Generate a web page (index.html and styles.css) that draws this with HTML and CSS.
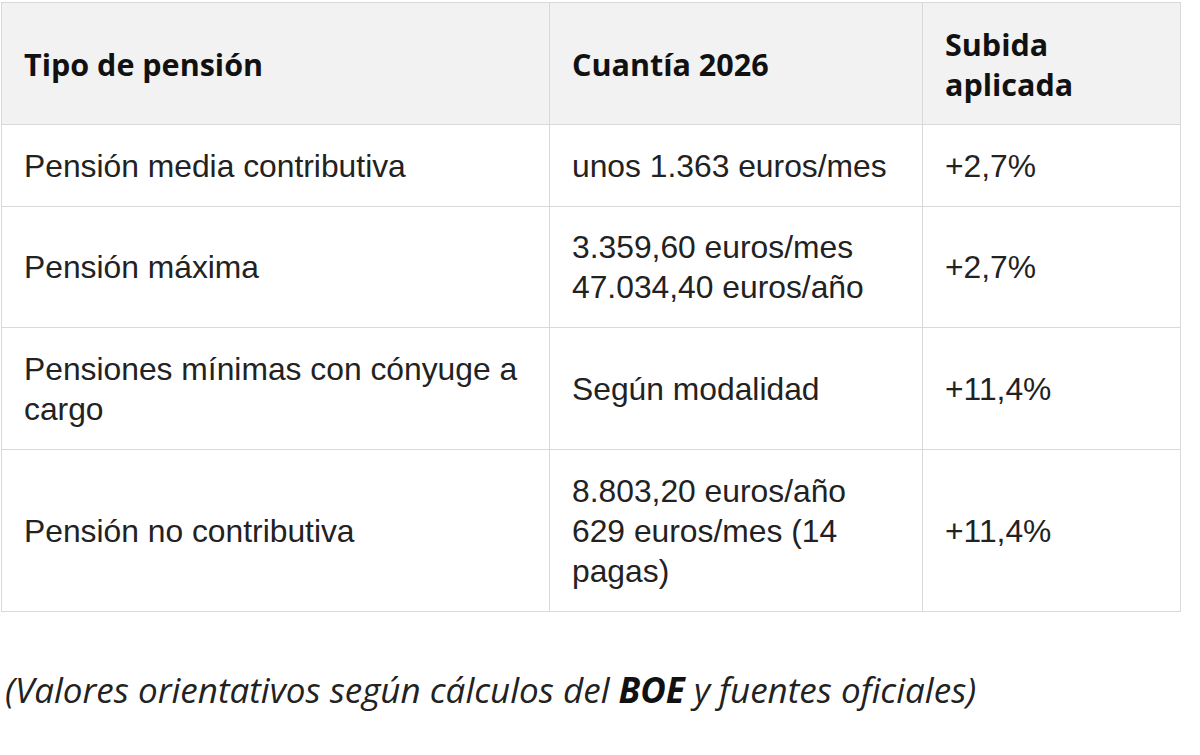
FILE: index.html
```html
<!DOCTYPE html>
<html lang="es">
<head>
<meta charset="utf-8">
<title>Pensiones 2026</title>
<link rel="stylesheet" href="styles.css">
</head>
<body>
<table class="pens">
  <colgroup>
    <col class="c1"><col class="c2"><col class="c3">
  </colgroup>
  <thead>
    <tr class="rh">
      <th>Tipo de pensión</th>
      <th>Cuantía 2026</th>
      <th>Subida<br>aplicada</th>
    </tr>
  </thead>
  <tbody>
    <tr class="r1">
      <td>Pensión media contributiva</td>
      <td>unos 1.363 euros/mes</td>
      <td>+2,7%</td>
    </tr>
    <tr class="r2">
      <td>Pensión máxima</td>
      <td>3.359,60 euros/mes<br>47.034,40 euros/año</td>
      <td>+2,7%</td>
    </tr>
    <tr class="r3">
      <td>Pensiones mínimas con cónyuge a cargo</td>
      <td>Según modalidad</td>
      <td>+11,4%</td>
    </tr>
    <tr class="r4">
      <td>Pensión no contributiva</td>
      <td>8.803,20 euros/año<br>629 euros/mes (14 pagas)</td>
      <td>+11,4%</td>
    </tr>
  </tbody>
</table>
<p class="note">(Valores orientativos según cálculos del <strong>BOE</strong> y fuentes oficiales)</p>
</body>
</html>
```

FILE: styles.css
```css
html, body {
  margin: 0;
  padding: 0;
  background: #ffffff;
}
body {
  padding: 2px 0 0 1px;
}
.pens {
  border-collapse: collapse;
  table-layout: fixed;
  width: 1179px;
  font-family: "Liberation Sans", Arial, sans-serif;
  font-size: 31.8px;
  line-height: 40px;
  color: #222222;
}
.c1 { width: 548px; }
.c2 { width: 373px; }
.c3 { width: 258px; }
.pens th, .pens td {
  border: 1px solid #d9d9d9;
  padding: 0 20px 0 22px;
  text-align: left;
  vertical-align: middle;
}
.pens th {
  background: #f2f2f2;
  font-family: "Open Sans", "Noto Sans", sans-serif;
  font-weight: 700;
  font-size: 30.5px;
  color: #111111;
}
.rh { height: 122px; }
.r1 { height: 82px; }
.r2 { height: 121px; }
.r3 { height: 122px; }
.r4 { height: 162px; }
.note {
  margin: 54px 0 0 4px;
  font-family: "Open Sans", "Noto Sans", sans-serif;
  font-style: italic;
  font-size: 35px;
  color: #222222;
}
.note strong {
  font-weight: 700;
  color: #111111;
}
```
